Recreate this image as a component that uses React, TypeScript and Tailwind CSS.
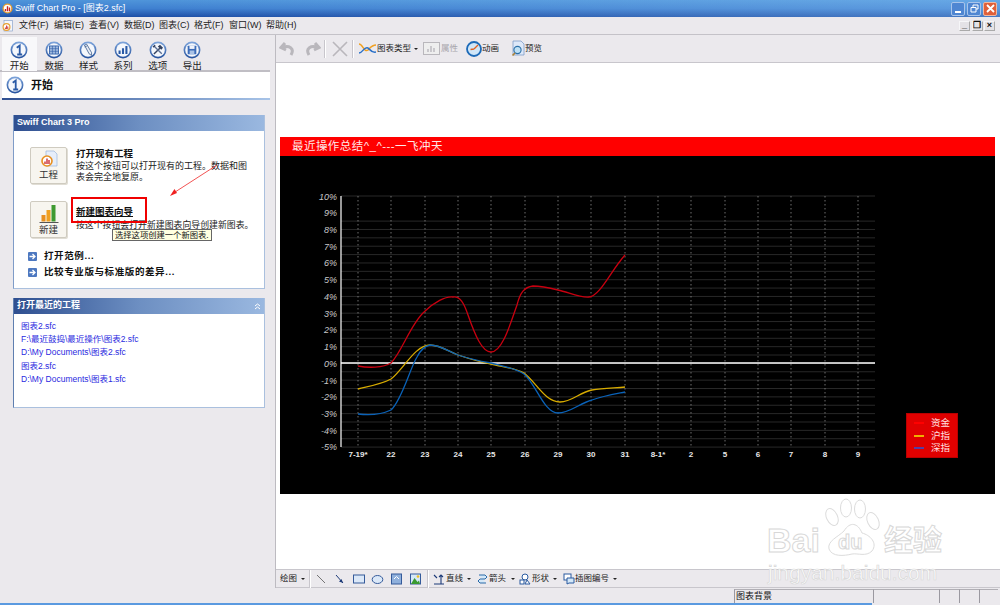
import type { ReactNode } from 'react'

const menus = ['文件(F)', '编辑(E)', '查看(V)', '数据(D)', '图表(C)', '格式(F)', '窗口(W)', '帮助(H)']

const recent = ['图表2.sfc', 'F:\\最近鼓捣\\最近操作\\图表2.sfc', 'D:\\My Documents\\图表2.sfc', '图表2.sfc', 'D:\\My Documents\\图表1.sfc']

const xLabels = [
  [358, '7-19*'], [391, '22'], [425, '23'], [458, '24'], [491, '25'], [525, '26'], [558, '29'], [591, '30'],
  [625, '31'], [658, '8-1*'], [691, '2'], [725, '5'], [758, '6'], [791, '7'], [825, '8'], [858, '9'],
] as const

const redLine = 'M358 366 C368 368 383 368 391 363 C402 352 410 325 424 312 C434 302 446 296 453 297 C460 296 464 303 468 315 C475 335 482 352 491 352 C502 352 510 325 517 305 C520 293 524 287 533 286 C542 286 550 288 558 290 C568 292 580 298 589 297 C600 296 610 272 625 255'
const yellowLine = 'M358 389 C370 386 382 384 391 379 C403 370 415 345 430 345 C440 345 448 351 458 355 C470 359 480 362 491 364 C503 367 515 368 524 373 C536 382 545 402 560 402 C572 402 580 392 592 390 C603 388 615 388 625 387'
const blueLine = 'M358 414 C366 415 378 416 391 410 C402 400 410 368 417 357 C421 349 425 346 430 345 C440 345 448 351 458 355 C470 359 480 361 491 363 C503 366 515 368 524 374 C536 384 544 413 558 413 C570 413 580 403 592 400 C603 396 615 394 625 392'

function RoundIcon({ size = 18, children }: { size?: number; children: ReactNode }) {
  return (
    <svg width={size} height={size} viewBox="0 0 20 20">
      <defs>
        <linearGradient id="ring" x1="0" y1="0" x2="0" y2="1">
          <stop offset="0" stopColor="#7fa6dc" />
          <stop offset="1" stopColor="#23509c" />
        </linearGradient>
      </defs>
      <circle cx="10" cy="10" r="9.4" fill="url(#ring)" />
      <circle cx="10" cy="10" r="7.6" fill="#f4f7fc" />
      {children}
    </svg>
  )
}

const tabIcons: Record<string, ReactNode> = {
  开始: <path d="M7.5 7.5 L10.8 5 V15 M8 15 H13.5" fill="none" stroke="#2a5aa6" strokeWidth="2" />,
  数据: (
    <g>
      <rect x="5" y="5.5" width="10" height="9" fill="#9db8de" stroke="#2a5aa6" strokeWidth="0.9" />
      <path d="M5 8.5 H15 M5 11.5 H15 M8.3 5.5 V14.5 M11.7 5.5 V14.5" stroke="#2a5aa6" strokeWidth="0.6" />
    </g>
  ),
  样式: (
    <g>
      <path d="M6 4.5 L8.6 3.6 L14 13 L13.9 16 L11.3 14.3 Z" fill="#e6ebf4" stroke="#40608f" strokeWidth="0.9" />
      <path d="M6.2 6.6 L8.8 5.6" stroke="#40608f" strokeWidth="0.8" />
    </g>
  ),
  系列: <path d="M6.2 14.5 V10.5 M10 14.5 V8 M13.8 14.5 V5.5" stroke="#2a5aa6" strokeWidth="2.3" />,
  选项: (
    <g>
      <path d="M5.5 14.5 L12 8" stroke="#33415f" strokeWidth="1.6" />
      <path d="M9.8 6.2 L12.2 4.2 L15.6 7.6 L13.6 9.6 Z" fill="#33415f" />
      <path d="M5.5 5.5 L14.2 14.2" stroke="#5a6f94" strokeWidth="1.5" />
      <path d="M4.6 6.8 L6.8 4.6" stroke="#33415f" strokeWidth="1.6" />
    </g>
  ),
  导出: (
    <g>
      <rect x="5.2" y="5.2" width="9.6" height="9.6" rx="0.6" fill="#3c6cb8" />
      <rect x="7.2" y="5.2" width="5.6" height="3.6" fill="#eef3fb" />
      <rect x="7.4" y="10.6" width="5.2" height="4.2" fill="#a9c2e6" />
    </g>
  ),
}

function Tab({ label, active }: { label: string; active?: boolean }) {
  return (
    <div className={`flex h-[34px] w-[34.6px] flex-col items-center pt-[4px] ${active ? 'bg-[#f8f8fa]' : ''}`}>
      <RoundIcon>{tabIcons[label]}</RoundIcon>
      <span className="mt-[1px] text-[9.5px] leading-[11px] text-[#222]">{label}</span>
    </div>
  )
}

function PanelHeader({ title, chevron }: { title: string; chevron?: boolean }) {
  return (
    <div className="flex h-[16px] items-center justify-between bg-gradient-to-r from-[#2f4f90] via-[#6d8fc2] to-[#9ab8e0] pl-[3px] pr-[3px] text-[9px] font-bold text-white">
      <span>{title}</span>
      {chevron && (
        <svg width="7" height="7" viewBox="0 0 7 7">
          <path d="M1 3 L3.5 1 L6 3 M1 6 L3.5 4 L6 6" fill="none" stroke="#fff" strokeWidth="1" />
        </svg>
      )}
    </div>
  )
}

function BigButton({ label, children }: { label: string; children: ReactNode }) {
  return (
    <div className="flex h-[37px] w-[37px] shrink-0 flex-col items-center rounded-[2px] border border-[#cfcbc0] bg-[#f7f5ef] pt-[2px] shadow-[1px_1px_0_#e0ddd4]">
      {children}
      <span className="text-[9.5px] leading-[11px] text-[#333]">{label}</span>
    </div>
  )
}

function LinkRow({ text }: { text: string }) {
  return (
    <div className="flex h-[16px] items-center pl-[14px] text-[9.5px] font-bold tracking-[0.6px] text-[#111]">
      <svg width="9" height="9" viewBox="0 0 9 9" className="mr-[7px]">
        <rect width="9" height="9" rx="1" fill="#4d78c0" />
        <path d="M1.5 4.5 H6.5 M4.5 2 L7 4.5 L4.5 7" fill="none" stroke="#fff" strokeWidth="1.3" />
      </svg>
      {text}
    </div>
  )
}

function Caret({ className = '' }: { className?: string }) {
  return <span className={`h-0 w-0 shrink-0 border-x-[2px] border-t-[2px] border-x-transparent border-t-[#222] ${className}`} />
}

function Sep({ className = '' }: { className?: string }) {
  return <span className={`h-[18px] w-[2px] shrink-0 border-l border-r border-l-[#c8c6cc] border-r-white ${className}`} />
}

function StatusCell({ width, children }: { width: string; children?: ReactNode }) {
  return <div className={`flex h-[14px] items-center border-l border-t border-l-[#9a98a0] border-t-[#b0aeb4] pl-[1px] text-[9px] text-[#111] ${width}`}>{children}</div>
}

function Chart() {
  const hLines: number[] = []
  for (let i = 0; i <= 30; i++) {
    if (i === 1 || i === 2) continue
    hLines.push(196 + i * 8.37)
  }
  const yLabels = Array.from({ length: 16 }, (_, i) => 10 - i)
  return (
    <svg width="715" height="338" viewBox="280 156 715 338" className="block">
      {hLines.map((y) => (
        <line key={y} x1="341" x2="875" y1={y} y2={y} stroke="#2c2c2c" strokeWidth="0.9" />
      ))}
      {xLabels.map(([x]) => (
        <line key={x} x1={x} x2={x} y1="196" y2="447" stroke="#8a8a8a" strokeWidth="0.8" strokeDasharray="1.5 2.5" />
      ))}
      <line x1="341" x2="875" y1="363" y2="363" stroke="#fff" strokeWidth="1.3" />
      <line x1="341" x2="341" y1="196" y2="447" stroke="#fff" strokeWidth="1.2" />
      {yLabels.map((v, i) => (
        <text key={v} x="337" y={199.5 + i * 16.73} textAnchor="end" fontSize="9" fontStyle="italic" fill="#c8c8c8" fontFamily="'Liberation Sans', sans-serif">
          {v}%
        </text>
      ))}
      {xLabels.map(([x, t]) => (
        <text key={x} x={x} y="457" textAnchor="middle" fontSize="8" fontWeight="bold" fill="#e8e8e8" fontFamily="'Liberation Sans', sans-serif">
          {t}
        </text>
      ))}
      <path d={redLine} fill="none" stroke="#c80010" strokeWidth="1.3" />
      <path d={yellowLine} fill="none" stroke="#d8ac00" strokeWidth="1.3" />
      <path d={blueLine} fill="none" stroke="#0a62b8" strokeWidth="1.3" />
    </svg>
  )
}

function Watermark() {
  return (
    <svg width="190" height="92" viewBox="0 0 190 92" className="pointer-events-none absolute left-[762px] top-[497px]">
      <g fill="#fff" stroke="#dcdcdc" strokeWidth="1">
        <ellipse cx="70" cy="20" rx="5.5" ry="9" transform="rotate(-25 70 20)" />
        <ellipse cx="84" cy="11" rx="5.5" ry="9" />
        <ellipse cx="98" cy="12" rx="5.5" ry="9" />
        <ellipse cx="111" cy="24" rx="5.5" ry="9" transform="rotate(-25 111 24)" />
        <path d="M82 34 C88 24 96 26 100 36 C108 38 116 46 110 54 C104 60 96 56 90 57 C82 59 70 60 67 52 C65 44 76 40 82 34 Z" />
      </g>
      <g fontFamily="'Liberation Sans', sans-serif" fill="#fff" stroke="#d8d8d8" strokeWidth="1">
        <text x="5" y="55" fontSize="34" fontWeight="bold">Bai</text>
        <text x="76" y="52" fontSize="20" fontWeight="bold">du</text>
        <text x="122" y="54" fontSize="29" fontWeight="bold" fontFamily="'Noto Sans CJK SC', sans-serif">经验</text>
        <text x="6" y="83" fontSize="21" strokeWidth="0.7">jingyan.baidu.com</text>
      </g>
    </svg>
  )
}

export default function App() {
  return (
    <div className="relative flex h-[605px] w-[1000px] flex-col overflow-hidden bg-[#ebe9ed] font-['Liberation_Sans','Noto_Sans_CJK_SC',sans-serif] text-[9.5px]">
      {/* title bar */}
      <div className="flex h-[17px] items-center bg-[linear-gradient(to_right,transparent_15%,rgba(150,205,250,0.35)),linear-gradient(to_bottom,#4f95da,#3f80d0_50%,#1d4ea6)] pl-[2px] pr-[3px]">
        <svg width="11" height="11" viewBox="0 0 12 12">
          <circle cx="6" cy="6" r="5.5" fill="#e8a030" />
          <circle cx="6" cy="6" r="4" fill="#fff" />
          <path d="M3.8 9 V6.5 M6 9 V3.5 M8.2 9 V5" stroke="#c82020" strokeWidth="1.5" />
        </svg>
        <span className="ml-[2px] text-[9px] text-white">Swiff Chart Pro - [图表2.sfc]</span>
        <div className="ml-auto flex gap-[2px]">
          <div className="flex h-[14px] w-[14px] items-end justify-center rounded-[2px] border border-[#a8c4ea] bg-[#4f86d2] pb-[2px]">
            <span className="h-[2px] w-[6px] bg-white" />
          </div>
          <div className="flex h-[14px] w-[14px] items-center justify-center rounded-[2px] border border-[#a8c4ea] bg-[#4f86d2]">
            <svg width="9" height="9" viewBox="0 0 9 9">
              <path d="M3 3 V1 H8 V5 H6 M1 3.5 H6 V8 H1 Z" fill="none" stroke="#fff" strokeWidth="1" />
            </svg>
          </div>
          <div className="flex h-[14px] w-[14px] items-center justify-center rounded-[2px] border border-[#f0b8a0] bg-[#e0603a]">
            <svg width="9" height="9" viewBox="0 0 9 9">
              <path d="M1 1 L8 8 M8 1 L1 8" stroke="#fff" strokeWidth="1.8" />
            </svg>
          </div>
        </div>
      </div>

      {/* menu bar */}
      <div className="flex h-[18px] items-center border-b border-b-[#c4c2c8] pl-[2px] pr-[5px]">
        <svg width="11" height="12" viewBox="0 0 11 12">
          <rect x="2" y="0.5" width="8.5" height="10.5" fill="#f4f6fb" stroke="#8ea6cc" strokeWidth="0.7" />
          <circle cx="4.5" cy="7" r="4" fill="#e8a030" />
          <circle cx="4.5" cy="7" r="2.8" fill="#fff" />
          <path d="M3.4 9 V7.5 M4.6 9 V5.5 M5.8 9 V6.5" stroke="#c82020" strokeWidth="0.9" />
        </svg>
        <div className="ml-[6px] flex gap-[9px] text-[9px] text-[#222]">
          {menus.map((m) => (
            <span key={m} className={`whitespace-nowrap ${m === '窗口(W)' ? 'w-[28px]' : 'w-[26px]'}`}>{m}</span>
          ))}
        </div>
        <div className="ml-auto flex gap-[1.5px]">
          {['_', '❐', '×'].map((c) => (
            <span key={c} className="flex h-[10px] w-[11px] items-center justify-center border border-[#f6f6f8] border-b-[#aaa] border-r-[#aaa] bg-[#e4e2e6] text-[9px] font-bold leading-none text-[#111]">{c}</span>
          ))}
        </div>
      </div>

      {/* main */}
      <div className="flex min-h-0 flex-1">
        {/* left pane */}
        <div className="flex w-[276px] shrink-0 flex-col border-r border-r-[#bdbbc1]">
          <div className="mr-[5px] mt-[2px] flex h-[35px] border-b-2 border-b-[#c0bec4] pl-[2px]">
            <Tab label="开始" active />
            <Tab label="数据" />
            <Tab label="样式" />
            <Tab label="系列" />
            <Tab label="选项" />
            <Tab label="导出" />
          </div>
          <div className="ml-[2px] mr-[5px] flex h-[26px] items-center bg-white pl-[4px]">
            <RoundIcon size={18}>{tabIcons['开始']}</RoundIcon>
            <span className="ml-[7px] text-[11px] font-bold text-[#111]">开始</span>
          </div>
          <div className="ml-[2px] mr-[5px] h-[2px] bg-gradient-to-r from-[#2f4f90] to-[#a8c4e8]" />

          <div className="ml-[13px] mt-[15px] w-[252px] border-x border-b border-x-[#aac0de] border-b-[#aac0de] border-l-[#7f9cc8]">
            <PanelHeader title="Swiff Chart 3 Pro" />
            <div className="h-[157px] bg-white pt-[16px]">
              <div className="flex pl-[16px]">
                <BigButton label="工程">
                  <svg width="20" height="19" viewBox="0 0 20 19">
                    <path d="M7 1 H15 L18 4 V16 H7 Z" fill="#e6eefa" stroke="#9ab4da" strokeWidth="0.7" />
                    <circle cx="8" cy="11" r="5.8" fill="#e89020" />
                    <circle cx="8" cy="11" r="4.2" fill="#fff" />
                    <path d="M6 14 V11.5 M8 14 V8.5 M10 14 V10" stroke="#c82020" strokeWidth="1.3" />
                  </svg>
                </BigButton>
                <div className="ml-[9px] whitespace-nowrap text-[9px] leading-[11.5px] text-[#222]">
                  <div className="mb-[1px] mt-[1px] text-[9.5px] font-bold text-[#111]">打开现有工程</div>
                  <div>按这个按钮可以打开现有的工程。数据和图</div>
                  <div>表会完全地复原。</div>
                </div>
              </div>
              <div className="mt-[17px] flex pl-[16px]">
                <BigButton label="新建">
                  <svg width="20" height="20" viewBox="0 0 20 20">
                    <rect x="2.5" y="11" width="4" height="6.5" fill="#e89020" />
                    <rect x="7.5" y="6" width="4" height="11.5" fill="#f0a020" />
                    <rect x="12.5" y="1" width="4" height="16.5" fill="#3f9a30" />
                    <path d="M0.5 18.5 H19.5" stroke="#555" strokeWidth="1" />
                  </svg>
                </BigButton>
                <div className="ml-[9px] whitespace-nowrap text-[8.9px] leading-[11.5px] text-[#222]">
                  <div className="mb-[2px] mt-[5px] text-[9.5px] font-bold text-[#111] underline">新建图表向导</div>
                  <div>按这个按钮会打开新建图表向导创建新图表。</div>
                </div>
              </div>
              <div className="mt-[10px]">
                <LinkRow text="打开范例..." />
                <LinkRow text="比较专业版与标准版的差异..." />
              </div>
            </div>
          </div>

          <div className="ml-[13px] mt-[9px] w-[252px] border-x border-b border-x-[#aac0de] border-b-[#aac0de] border-l-[#5f7fb0]">
            <PanelHeader title="打开最近的工程" chevron />
            <div className="h-[93px] bg-white pl-[7px] pt-[6px] text-[8.5px] leading-[13.2px] text-[#2a2ae0]">
              {recent.map((r, i) => (
                <div key={i}>{r}</div>
              ))}
            </div>
          </div>
        </div>

        {/* right pane */}
        <div className="flex min-w-0 flex-1 flex-col">
          <div className="flex h-[27px] items-center whitespace-nowrap pl-[3px] text-[8.5px] text-[#222]">
            <svg width="18" height="18" viewBox="0 0 18 18" className="shrink-0"><path d="M6 3 L2 7.5 L7 10 M3 7.5 C10 5 16 8 12 15" fill="none" stroke="#b9b7bc" strokeWidth="3" /></svg>
            <svg width="18" height="18" viewBox="0 0 18 18" className="ml-[6px] shrink-0"><path d="M12 3 L16 7.5 L11 10 M15 7.5 C8 5 2 8 6 15" fill="none" stroke="#b9b7bc" strokeWidth="3" /></svg>
            <Sep className="ml-[3px]" />
            <svg width="18" height="18" viewBox="0 0 18 18" className="ml-[5px] shrink-0"><path d="M2 2 L16 16 M16 2 L2 16" stroke="#b9b7bc" strokeWidth="1.6" /></svg>
            <Sep className="ml-[3px]" />
            <svg width="17" height="12" viewBox="0 0 17 12" className="ml-[5px] shrink-0">
              <path d="M0 1 C4 1 5 10 9 7 C11 5 13 2 17 2" fill="none" stroke="#f0a020" strokeWidth="1.5" />
              <path d="M0 10 C4 10 5 3 9 5 C11 7 13 10 17 9" fill="none" stroke="#2a70c8" strokeWidth="1.5" />
            </svg>
            <span className="ml-[1px]">图表类型</span>
            <Caret className="ml-[3px]" />
            <svg width="17" height="13" viewBox="0 0 17 13" className="ml-[5px] shrink-0"><rect x="0.5" y="0.5" width="16" height="12" fill="#eee" stroke="#b9b7bc" /><path d="M5 10 V7 M8 10 V4 M11 10 V6" stroke="#c0bec4" strokeWidth="1.6" /></svg>
            <span className="ml-[1px] text-[#a8a6ac]">属性</span>
            <svg width="16" height="16" viewBox="0 0 16 16" className="ml-[8px] shrink-0">
              <circle cx="8" cy="8" r="7" fill="#cfe6f8" stroke="#1c6ab8" strokeWidth="1.8" />
              <path d="M8 8 L12 4 M8 8 L4.5 8.5" stroke="#e06020" strokeWidth="1.3" />
            </svg>
            <span>动画</span>
            <svg width="15" height="17" viewBox="0 0 15 17" className="ml-[12px] shrink-0">
              <path d="M2 1 H10 L13 4 V15 H2 Z" fill="#dde8f8" stroke="#7f9cc8" strokeWidth="0.8" />
              <circle cx="6.5" cy="10" r="3.6" fill="#bfe0f4" stroke="#2a70a8" strokeWidth="1.1" />
              <path d="M4 13 L1.5 15.5" stroke="#b08030" strokeWidth="1.6" />
            </svg>
            <span className="ml-[-1px]">预览</span>
          </div>

          <div className="min-h-0 flex-1 border-y border-y-[#c8c6cc] bg-white pl-[4px] pr-[5px] pt-[74px]">
            <div className="relative h-[357px] bg-black">
              <div className="h-[19px] bg-[#ff0000] pl-[12px] text-[11.5px] leading-[19px] tracking-[0.45px] text-[#ffe8e8]">最近操作总结^_^---一飞冲天</div>
              <Chart />
              <div className="absolute left-[626px] top-[276px] flex h-[45px] w-[52px] flex-col justify-center gap-[1px] border border-[#b80000] bg-[#e00000] text-[9.5px] leading-[11.5px] text-[#ffe0e0]">
                {[['bg-[#ff0000]', '资金'], ['bg-[#f0b000]', '沪指'], ['bg-[#5040a8]', '深指']].map(([c, t]) => (
                  <div key={t} className="flex items-center pl-[7px]">
                    <span className={`h-[2px] w-[10px] ${c}`} />
                    <span className="ml-[7px]">{t}</span>
                  </div>
                ))}
              </div>
            </div>
          </div>

          <div className="flex h-[18px] items-center whitespace-nowrap border-b border-b-[#c8c6cc] pl-[4px] text-[8.5px] text-[#222]">
            <span>绘图</span>
            <Caret className="ml-[4px]" />
            <Sep className="ml-[4px]" />
            <svg width="107" height="14" viewBox="0 0 107 14" className="ml-[4px] shrink-0">
              <path d="M2 3 L10 11" stroke="#555" strokeWidth="0.8" />
              <path d="M21 3 L28 11" stroke="#1c3a78" strokeWidth="1" />
              <path d="M28 11 L24 9.5 L26.5 7 Z" fill="#1c3a78" />
              <rect x="38.5" y="3" width="11" height="8" fill="#dbe8f8" stroke="#345a9a" />
              <ellipse cx="62.5" cy="7.5" rx="5.3" ry="4" fill="#dbe8f8" stroke="#345a9a" />
              <rect x="76.5" y="2" width="10" height="10" fill="#8fb0dc" stroke="#345a9a" />
              <path d="M79 7 L81.5 4.5 L84 7" fill="none" stroke="#fff" />
              <rect x="95.5" y="2" width="10" height="10" fill="#d4e8f8" stroke="#345a9a" />
              <path d="M96 12 L99.5 6 L102.5 10 L104 8.5 L105 12 Z" fill="#3a9a30" />
              <circle cx="103" cy="4.5" r="1.3" fill="#f0c020" />
            </svg>
            <Sep className="ml-[5px]" />
            <svg width="12" height="12" viewBox="0 0 12 12" className="ml-[4px] shrink-0"><path d="M1 2 L4 5 M1 11 H11 M8 11 V2 M6 4 L8 2 L10 4" fill="none" stroke="#1c3a78" strokeWidth="1.1" /></svg>
            <span className="ml-[1px]">直线</span>
            <Caret className="ml-[4px]" />
            <svg width="11" height="12" viewBox="0 0 11 12" className="ml-[6px] shrink-0"><path d="M2 2 H8 L10 4 L8 6 H3 L1 8 L3 10 H9" fill="#d4e8f8" stroke="#2a6aa8" strokeWidth="1" /></svg>
            <span className="ml-[1px]">箭头</span>
            <Caret className="ml-[5px]" />
            <svg width="12" height="12" viewBox="0 0 12 12" className="ml-[4px] shrink-0"><circle cx="6" cy="4" r="3" fill="#fff" stroke="#2a5aa0" /><rect x="1" y="7" width="4" height="4" fill="#fff" stroke="#2a5aa0" /><path d="M8 7 L11 11 H6 Z" fill="#fff" stroke="#2a5aa0" /></svg>
            <span className="ml-[1px]">形状</span>
            <Caret className="ml-[4px]" />
            <svg width="12" height="12" viewBox="0 0 12 12" className="ml-[6px] shrink-0"><rect x="1" y="1" width="7" height="6" fill="#fff" stroke="#2a5aa0" /><path d="M4 5 H11 V10 H6 L4 11 Z" fill="#d4e8f8" stroke="#2a5aa0" /></svg>
            <span>插图编号</span>
            <Caret className="ml-[4px]" />
          </div>
        </div>
      </div>

      {/* status bar */}
      <div className="flex h-[17px] shrink-0 items-start justify-end pr-[2px] pt-[1px]">
        <StatusCell width="w-[139px]">图表背景</StatusCell>
        <StatusCell width="w-[66px]" />
        <StatusCell width="w-[20px]" />
        <StatusCell width="w-[20px]" />
        <StatusCell width="w-[19px]" />
      </div>
      <div className="absolute bottom-0 left-0 h-[2px] w-[872px] bg-[#5a9ae0]" />

      {/* annotations on top of the screenshot */}
      <div className="pointer-events-none absolute left-[71px] top-[197px] h-[26px] w-[76px] border-[2.5px] border-[#f00000]" />
      <svg width="60" height="45" viewBox="165 160 60 45" className="pointer-events-none absolute left-[165px] top-[160px]">
        <path d="M217 165 L172 194" stroke="#f04040" strokeWidth="0.9" />
        <path d="M170 196 L177 193 L174.5 189 Z" fill="#f02020" />
      </svg>
      <div className="absolute left-[112px] top-[229px] h-[12px] whitespace-nowrap border border-[#666] bg-[#ffffe1] px-[2px] text-[8.3px] leading-[10px] text-[#111]">选择这项创建一个新图表.</div>
      <Watermark />
    </div>
  )
}
